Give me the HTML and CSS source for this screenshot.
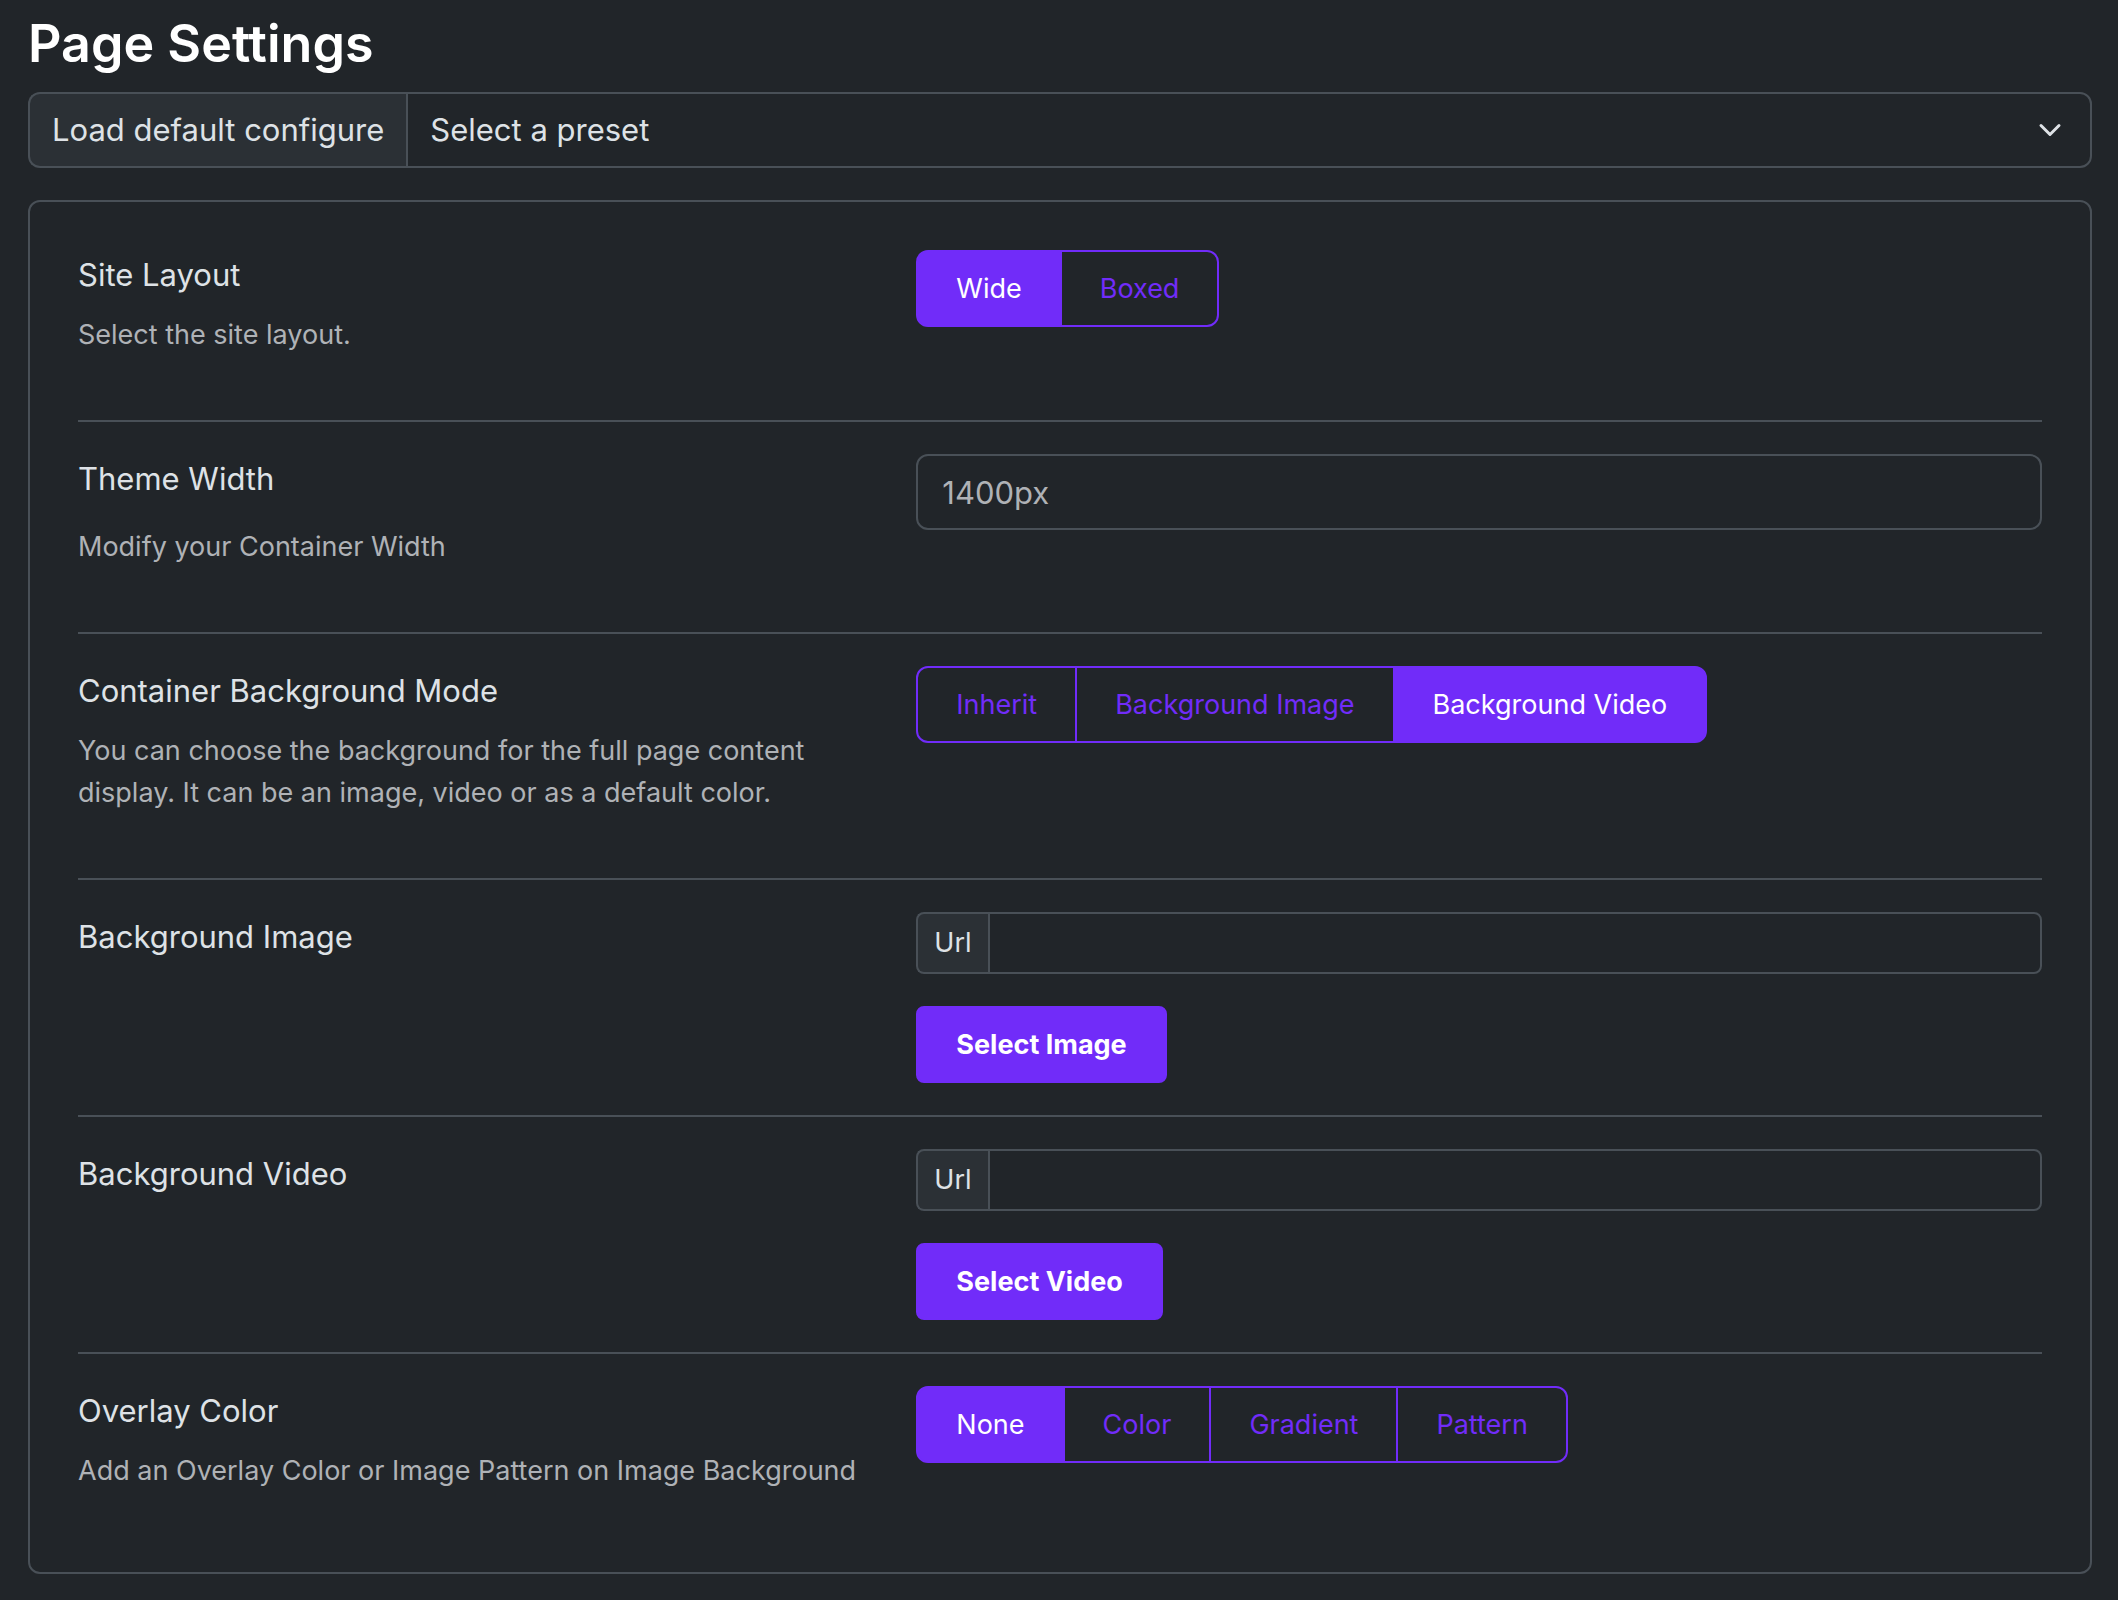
FILE: index.html
```html
<!DOCTYPE html>
<html lang="en">
<head>
<meta charset="utf-8">
<meta name="viewport" content="width=device-width, initial-scale=1">
<title>Page Settings</title>
<link rel="stylesheet" href="styles.css">
</head>
<body>
<main class="page">
  <h1 class="page-title">Page Settings</h1>

  <div class="input-group input-group-lg">
    <label class="addon" for="preset">Load default configure</label>
    <div class="select-wrap">
      <select class="control select" id="preset">
        <option>Select a preset</option>
      </select>
      <svg class="chevron" viewBox="0 0 16 16" aria-hidden="true"><path d="m2 5 6 6 6-6" fill="none" stroke="currentColor" stroke-width="2" stroke-linecap="round" stroke-linejoin="round"/></svg>
    </div>
  </div>

  <form class="card">
    <section class="row">
      <div class="info">
        <h2 class="label" id="layout-label">Site Layout</h2>
        <p class="help">Select the site layout.</p>
      </div>
      <div class="field">
        <div class="segments" role="radiogroup" aria-labelledby="layout-label">
          <input type="radio" name="layout" id="layout-wide" checked><label for="layout-wide">Wide</label>
          <input type="radio" name="layout" id="layout-boxed"><label for="layout-boxed">Boxed</label>
        </div>
      </div>
    </section>

    <section class="row">
      <div class="info info-spaced">
        <label class="label" for="theme-width">Theme Width</label>
        <p class="help">Modify your Container Width</p>
      </div>
      <div class="field">
        <input class="control control-lg" type="text" id="theme-width" placeholder="1400px">
      </div>
    </section>

    <section class="row">
      <div class="info">
        <h2 class="label" id="mode-label">Container Background Mode</h2>
        <p class="help">You can choose the background for the full page content display. It can be an image, video or as a default color.</p>
      </div>
      <div class="field">
        <div class="segments" role="radiogroup" aria-labelledby="mode-label">
          <input type="radio" name="mode" id="mode-inherit"><label for="mode-inherit">Inherit</label>
          <input type="radio" name="mode" id="mode-image"><label for="mode-image">Background Image</label>
          <input type="radio" name="mode" id="mode-video" checked><label for="mode-video">Background Video</label>
        </div>
      </div>
    </section>

    <section class="row">
      <div class="info">
        <h2 class="label">Background Image</h2>
      </div>
      <div class="field">
        <div class="input-group">
          <label class="addon" for="image-url">Url</label>
          <input class="control" type="text" id="image-url">
        </div>
        <button class="button" type="button">Select Image</button>
      </div>
    </section>

    <section class="row">
      <div class="info">
        <h2 class="label">Background Video</h2>
      </div>
      <div class="field">
        <div class="input-group">
          <label class="addon" for="video-url">Url</label>
          <input class="control" type="text" id="video-url">
        </div>
        <button class="button" type="button">Select Video</button>
      </div>
    </section>

    <section class="row">
      <div class="info">
        <h2 class="label" id="overlay-label">Overlay Color</h2>
        <p class="help">Add an Overlay Color or Image Pattern on Image Background</p>
      </div>
      <div class="field">
        <div class="segments" role="radiogroup" aria-labelledby="overlay-label">
          <input type="radio" name="overlay" id="overlay-none" checked><label for="overlay-none">None</label>
          <input type="radio" name="overlay" id="overlay-color"><label for="overlay-color">Color</label>
          <input type="radio" name="overlay" id="overlay-gradient"><label for="overlay-gradient">Gradient</label>
          <input type="radio" name="overlay" id="overlay-pattern"><label for="overlay-pattern">Pattern</label>
        </div>
      </div>
    </section>
  </form>
</main>
</body>
</html>
```
FILE: styles.css
```css
:root {
  --bg: #212529;
  --raised: #2b3035;
  --line: #495057;
  --text: #dee2e6;
  --muted: #afb2b6;
  --accent: #712cf9;
}

*, *::before, *::after { box-sizing: border-box; }

body {
  margin: 0;
  background: var(--bg);
  color: var(--text);
  font-family: Inter, "Liberation Sans", sans-serif;
  font-size: 27px;
  line-height: 42px;
}

.page { padding: 10px 26px 26px 28px; }

.page-title {
  margin: 0 0 14px;
  color: #fff;
  font-size: 52px;
  font-weight: 600;
  line-height: 68px;
}

.control {
  display: block;
  width: 100%;
  min-width: 0;
  height: 62px;
  margin: 0;
  padding: 0 16px;
  border: 2px solid var(--line);
  border-radius: 8px;
  background: transparent;
  color: var(--text);
  font: inherit;
}

.control::placeholder { color: var(--muted); opacity: 1; }

.control-lg {
  height: 76px;
  padding: 0 24px;
  border-radius: 12px;
  font-size: 31px;
}

.input-group { display: flex; }

.addon {
  display: flex;
  flex: none;
  align-items: center;
  padding: 0 16px;
  border: 2px solid var(--line);
  border-right: 0;
  border-radius: 8px 0 0 8px;
  background: var(--raised);
}

.input-group .control { border-radius: 0 8px 8px 0; }

.input-group-lg { font-size: 31px; }
.input-group-lg .addon { padding: 0 22px; border-radius: 12px 0 0 12px; }
.input-group-lg .control { height: 76px; padding: 0 72px 0 22px; border-radius: 0 12px 12px 0; }

.select-wrap { position: relative; flex: 1; }
.select { appearance: none; }

.chevron {
  position: absolute;
  top: 26px;
  right: 30px;
  width: 24px;
  height: 24px;
  pointer-events: none;
}

.card {
  margin-top: 32px;
  padding: 48px;
  border: 2px solid var(--line);
  border-radius: 12px;
}

.row {
  display: grid;
  grid-template-columns: repeat(12, minmax(0, 1fr));
  column-gap: 48px;
}

.row + .row {
  margin-top: 32px;
  padding-top: 32px;
  border-top: 2px solid var(--line);
}

.info { grid-column: span 5; }

.label {
  display: block;
  margin: 0 0 14px;
  font-size: 31px;
  font-weight: 400;
  line-height: 50px;
}

.info-spaced .label { margin-bottom: 22px; }

.help { margin: 0 0 32px; color: var(--muted); }

.field {
  display: flex;
  grid-column: span 7;
  flex-direction: column;
  align-items: flex-start;
  gap: 32px;
}

.field .input-group { width: 100%; }

.segments { display: flex; position: relative; }

/* The radios stay focusable while their labels act as the visible segments. */
.segments input {
  position: absolute;
  margin: 0;
  opacity: 0;
  pointer-events: none;
}

.segments label,
.button {
  padding: 16px 38px;
  border: 2px solid var(--accent);
  line-height: 41px;
  font-size: 27px;
  cursor: pointer;
}

.segments label { color: var(--accent); }
.segments label + input + label { margin-left: -2px; }
.segments label:first-of-type { border-radius: 12px 0 0 12px; }
.segments label:last-of-type { border-radius: 0 12px 12px 0; }
.segments input:checked + label { background: var(--accent); color: #fff; }
.segments input:focus-visible + label { outline: 4px solid #a98eda; }

.button {
  border-radius: 8px;
  background: var(--accent);
  color: #fff;
  font-family: inherit;
  font-weight: 700;
}
```
